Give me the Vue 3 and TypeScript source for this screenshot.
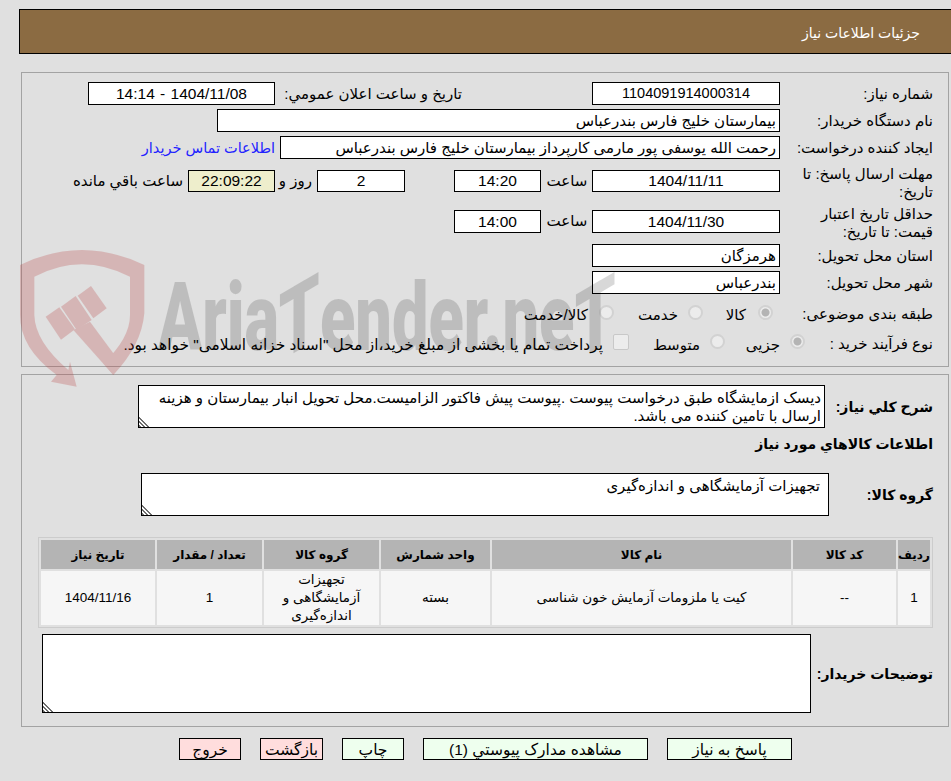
<script setup lang="ts">
interface Column { title: string; width: number }
const columns: Column[] = [
  { title: 'ردیف', width: 32 },
  { title: 'کد کالا', width: 103 },
  { title: 'نام کالا', width: 299 },
  { title: 'واحد شمارش', width: 109 },
  { title: 'گروه کالا', width: 115 },
  { title: 'تعداد / مقدار', width: 105 },
  { title: 'تاریخ نیاز', width: 114 },
]
const cells: string[] = [
  '1',
  '--',
  'کیت یا ملزومات آزمایش خون شناسی',
  'بسته',
  'تجهیزات آزمایشگاهی و اندازه‌گیری',
  '1',
  '1404/11/16',
]
</script>

<template>
  <div class="page">
    <header class="title-bar">جزئیات اطلاعات نیاز</header>

    <section class="panel panel-top">
      <div class="row">
        <div class="label">شماره نیاز:</div>
        <div class="box center w188 serial">1104091914000314</div>
        <div class="announce">تاریخ و ساعت اعلان عمومي:</div>
        <div class="box center w187 stamp">1404/11/08 - 14:14</div>
      </div>
      <div class="row">
        <div class="label">نام دستگاه خریدار:</div>
        <div class="box w563">بیمارستان خلیج فارس بندرعباس</div>
      </div>
      <div class="row">
        <div class="label">ایجاد کننده درخواست:</div>
        <div class="box w500">رحمت الله یوسفی پور مارمی کارپرداز بیمارستان خلیج فارس بندرعباس</div>
        <a class="contact" href="#">اطلاعات تماس خریدار</a>
      </div>
      <div class="row row-tall">
        <div class="label">مهلت ارسال پاسخ: تا تاریخ:</div>
        <div class="box center w188 h22">1404/11/11</div>
        <div class="unit">ساعت</div>
        <div class="box center w87 h22">14:20</div>
        <div class="box center w88 h22 days">2</div>
        <div class="unit day-unit">روز و</div>
        <div class="box center w87 h22 timer">22:09:22</div>
        <div class="unit remain">ساعت باقي مانده</div>
      </div>
      <div class="row row-tall row-second">
        <div class="label">حداقل تاریخ اعتبار قیمت: تا تاریخ:</div>
        <div class="box center w188">1404/11/30</div>
        <div class="unit">ساعت</div>
        <div class="box center w87">14:00</div>
      </div>
      <div class="row">
        <div class="label">استان محل تحویل:</div>
        <div class="box w188">هرمزگان</div>
      </div>
      <div class="row">
        <div class="label">شهر محل تحویل:</div>
        <div class="box w188">بندرعباس</div>
      </div>
      <div class="row row-options row-subject">
        <div class="label">طبقه بندی موضوعی:</div>
        <label class="option o-kala"><input type="radio" name="subject" checked disabled /><span>کالا</span></label>
        <label class="option o-service"><input type="radio" name="subject" disabled /><span>خدمت</span></label>
        <label class="option o-both"><input type="radio" name="subject" disabled /><span>کالا/خدمت</span></label>
      </div>
      <div class="row row-options row-process">
        <div class="label">نوع فرآیند خرید :</div>
        <label class="option o-small"><input type="radio" name="process" checked disabled /><span>جزیی</span></label>
        <label class="option o-medium"><input type="radio" name="process" disabled /><span>متوسط</span></label>
        <label class="option o-pay"><input type="checkbox" disabled /><span>پرداخت تمام یا بخشی از مبلغ خرید،از محل "اسناد خزانه اسلامی" خواهد بود.</span></label>
      </div>
    </section>

    <section class="panel panel-bottom">
      <div class="row desc-row">
        <div class="label strong desc-label">شرح کلي نیاز:</div>
        <textarea class="area desc-area" readonly>دیسک ازمایشگاه طبق درخواست پیوست .پیوست پیش فاکتور الزامیست.محل تحویل انبار بیمارستان و هزینه ارسال با تامین کننده می باشد.</textarea>
      </div>
      <h2 class="goods-title">اطلاعات کالاهاي مورد نیاز</h2>
      <div class="row group-row">
        <div class="label strong group-label">گروه کالا:</div>
        <textarea class="area group-area" readonly>تجهیزات آزمایشگاهی و اندازه‌گیری</textarea>
      </div>
      <table class="goods">
        <colgroup>
          <col v-for="c in columns" :key="c.title" :style="{ width: c.width + 'px' }" />
        </colgroup>
        <thead>
          <tr><th v-for="c in columns" :key="c.title">{{ c.title }}</th></tr>
        </thead>
        <tbody>
          <tr><td v-for="(v, i) in cells" :key="i">{{ v }}</td></tr>
        </tbody>
      </table>
      <div class="row notes-row">
        <div class="label strong notes-label">توضیحات خریدار:</div>
        <textarea class="area notes-area" readonly></textarea>
      </div>
    </section>

    <nav class="actions">
      <button class="btn green reply" type="button">پاسخ به نیاز</button>
      <button class="btn green docs" type="button">مشاهده مدارک پیوستي (1)</button>
      <button class="btn green narrow" type="button">چاپ</button>
      <button class="btn red wide" type="button">بازگشت</button>
      <button class="btn red narrow" type="button">خروج</button>
    </nav>

    <svg class="wm-shield" viewBox="0 0 405 435" aria-hidden="true">
      <g fill="#b83a3a">
        <path d="M15 60 Q200 -30 388 60 L388 205 Q380 300 295 390 L265 355 Q345 280 345 210 L345 95 Q200 20 58 95 L58 210 Q60 290 160 375 L165 350 L185 425 L108 410 L125 390 Q15 310 15 210 Z" />
        <path d="M175 255 L225 230 L295 325 L295 390 Z" />
        <path d="M92 215 L133 187 L180 253 L138 284 Z" />
        <path d="M138 185 L182 153 L230 225 L185 255 Z" />
        <path d="M188 152 L228 123 L275 190 L235 220 Z" />
      </g>
    </svg>
    <div class="wm-text" aria-hidden="true">Aria<span class="slant">T</span>ender.ne<span class="slant">T</span></div>
  </div>
</template>

<style>
html, body { margin: 0; background: #e0e0e0; }
</style>

<style scoped>
.page {
  position: relative;
  height: 781px;
  overflow: hidden;
  padding-top: 9px;
  box-sizing: border-box;
  direction: rtl;
  background: #e0e0e0;
  color: #000;
  font-family: "Liberation Sans", "DejaVu Sans", sans-serif;
  font-size: 15px;
}
.title-bar {
  box-sizing: border-box;
  height: 45px;
  margin-left: 19px;
  padding: 14px 31px 0 0;
  background: #8b6b42;
  border-top: 1px solid #000;
  border-bottom: 1px solid #000;
  border-left: 1px solid #000;
  color: #fff;
  font-size: 14px;
  line-height: 18px;
}
.panel {
  box-sizing: border-box;
  margin: 0 2px 0 21px;
  border: 1px solid #a3a3a3;
}
.panel-top { margin-top: 18px; height: 295px; padding-top: 9px; }
.panel-bottom { margin-top: 7px; height: 353px; padding-top: 10px; }
.row { display: flex; align-items: center; min-height: 23px; margin-bottom: 4px; }
.label {
  box-sizing: border-box;
  flex: none;
  width: 168px;
  padding: 0 15px 0 10px;
  line-height: 18px;
}
.strong { font-weight: 700; font-size: 14px; white-space: nowrap; padding-left: 0; }
.box {
  box-sizing: border-box;
  flex: none;
  height: 23px;
  padding: 0 3px;
  background: #fff;
  border: 1px solid #000;
  line-height: 21px;
  white-space: nowrap;
  overflow: hidden;
}
.center { text-align: center; font-size: 15.5px; }
.serial { font-size: 14.5px; }
.stamp { font-size: 15.5px; word-spacing: 1px; }
.h22 { height: 22px; line-height: 20px; }
.w188 { width: 188px; }
.w187 { width: 187px; }
.w563 { width: 563px; }
.w500 { width: 500px; }
.w87 { width: 87px; }
.w88 { width: 88px; }
.announce { flex: none; width: 181px; margin: 0 130px 0 6px; white-space: nowrap; }
.contact { margin-right: 5px; color: #2222ff; font-size: 14.5px; text-decoration: none; white-space: nowrap; }
.unit { flex: none; width: 42px; margin: 0 4px 0 5px; text-align: center; white-space: nowrap; }
.days { margin-right: 49px; }
.day-unit { width: 32px; margin: 0 5px; }
.timer { background: #eeeecc; }
.remain { width: auto; margin: 0 5px 0 0; }
.row-tall { height: 36px; margin-top: 4px; }
.row-tall .label { margin-top: 3px; }
.row-second { margin-top: 3px; margin-bottom: 5px; }
.row-options { min-height: 18px; }
.row-subject { margin-top: 11px; }
.row-process { margin-top: 12px; }
.option { display: flex; align-items: center; flex: none; white-space: nowrap; }
.option input {
  appearance: none;
  box-sizing: border-box;
  flex: none;
  width: 15px;
  height: 15px;
  margin: -3px 7px 0 12px;
  background: #ececec;
  border: 2px solid #d2d2d2;
  border-radius: 50%;
}
.option input:checked { background: radial-gradient(circle, #b4b4b4 0 3.5px, #ececec 4.5px); }
.option input[type="checkbox"] {
  width: 16px;
  height: 16px;
  margin: -5px 0 0 10px;
  border-width: 1px;
  border-color: #c8c8c8;
  border-radius: 2px;
}
.option span { position: relative; top: 1px; }
.row-subject .o-kala { width: 70px; }
.row-subject .o-service { width: 89px; }
.row-subject .o-service input { margin-left: 10px; }
.row-subject .o-both input { margin-left: 11px; }
.row-process .label { width: 143px; }
.row-process .option input[type="radio"] { margin: -5px 0 0 10px; }
.row-process .o-small { width: 80px; }
.row-process .o-medium { width: 96px; }
.o-pay span { font-size: 15.4px; }
.area {
  display: block;
  box-sizing: border-box;
  flex: none;
  margin: 0;
  padding: 3px 3px 0;
  background: #fff;
  border: 1px solid #000;
  border-radius: 0;
  color: #000;
  font: inherit;
  line-height: 18px;
  overflow: hidden;
  outline: none;
}
.area::-webkit-resizer {
  background: linear-gradient(45deg, #6e6e6e 0 1.5px, #fff 1.5px 3px, #6e6e6e 3px 4.5px, #fff 4.5px 6px, #6e6e6e 6px 7.5px, transparent 7.5px) left bottom / 11px 11px no-repeat;
}
.desc-label { width: 123px; }
.desc-area { width: 687px; height: 43px; }
.desc-row { margin-bottom: 0; }
.goods-title { margin: 7px 15px 0 0; font-size: 14px; font-weight: 700; line-height: 18px; }
.group-row { margin: 20px 0 0; }
.group-label { width: 119px; }
.group-area { width: 688px; height: 43px; padding-right: 8px; }
.goods {
  box-sizing: border-box;
  width: 895px;
  margin: 21px 15px 0 0;
  table-layout: fixed;
  border-collapse: separate;
  border-spacing: 2px;
  border: 1px solid #cccccc;
  font-size: 13.5px;
}
.goods th {
  height: 29px;
  padding: 0;
  background: #b4b4b4;
  font-size: 12px;
  font-weight: 700;
  white-space: nowrap;
}
.goods td {
  height: 53px;
  padding: 0 6px;
  background: #f6f6f6;
  text-align: center;
  line-height: 18px;
}
.notes-row { margin: 6px 0 0; }
.notes-label { width: 137px; }
.notes-area { width: 769px; height: 79px; }
.actions {
  display: flex;
  gap: 19px;
  height: 22px;
  margin-top: 11px;
  padding-right: 159px;
}
.btn {
  box-sizing: border-box;
  height: 22px;
  padding: 1px 0 0;
  border: 1px solid #000;
  border-radius: 0;
  color: #000;
  font: inherit;
  font-size: 15.5px;
  line-height: 18px;
}
.green { background: #eeffee; }
.red { background: #ffdddd; }
.reply { width: 125px; }
.docs { width: 225px; }
.narrow { width: 62px; }
.wide { width: 63px; }
.wm-shield {
  position: absolute;
  left: 15px;
  top: 245px;
  width: 135px;
  height: 145px;
  opacity: 0.25;
  pointer-events: none;
}
.wm-text {
  position: absolute;
  left: 158px;
  top: 263px;
  direction: ltr;
  color: #000;
  font-family: Roboto, sans-serif;
  font-size: 94px;
  font-weight: 900;
  line-height: 110px;
  white-space: nowrap;
  opacity: 0.15;
  transform: scaleX(0.69);
  transform-origin: left top;
  pointer-events: none;
}
.slant { display: inline-block; transform: skewY(-22deg); }
</style>
